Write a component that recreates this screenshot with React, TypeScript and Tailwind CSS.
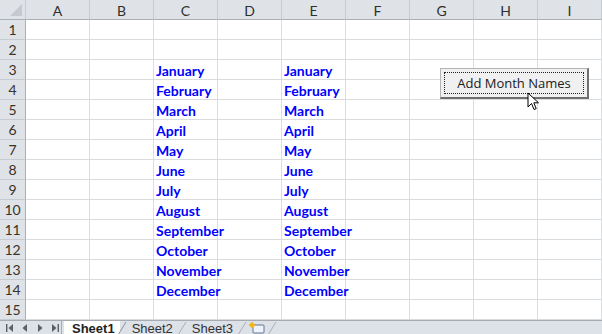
import React from "react";

const COLS = ["A", "B", "C", "D", "E", "F", "G", "H", "I"];
const MONTHS = [
  "January",
  "February",
  "March",
  "April",
  "May",
  "June",
  "July",
  "August",
  "September",
  "October",
  "November",
  "December",
];

function cellText(row: number, col: number) {
  // months sit in C3:C14 and E3:E14
  if ((col === 2 || col === 4) && row >= 3 && row <= 14) return MONTHS[row - 3];
  return "";
}

function Slant({ dark }: { dark?: boolean }) {
  return (
    <svg width="10" height="14" viewBox="0 0 10 14" className="shrink-0 -mx-[3px]">
      <line x1="1" y1="14" x2="9" y2="1" stroke={dark ? "#8a8f98" : "#a9aeb6"} strokeWidth="1" />
    </svg>
  );
}

function NavIcons() {
  return (
    <div className="flex items-center w-[62px] h-full pl-[6px] gap-[7px] border-r border-[#a6abb3]">
      <svg width="8" height="8" viewBox="0 0 8 8">
        <rect x="0" y="0" width="1.4" height="8" fill="#5b5f66" />
        <path d="M7 0 L2.5 4 L7 8 Z" fill="#5b5f66" />
      </svg>
      <svg width="8" height="8" viewBox="0 0 8 8">
        <path d="M6 0 L1.5 4 L6 8 Z" fill="#5b5f66" />
      </svg>
      <svg width="8" height="8" viewBox="0 0 8 8">
        <path d="M2 0 L6.5 4 L2 8 Z" fill="#5b5f66" />
      </svg>
      <svg width="8" height="8" viewBox="0 0 8 8">
        <path d="M1 0 L5.5 4 L1 8 Z" fill="#5b5f66" />
        <rect x="6.6" y="0" width="1.4" height="8" fill="#5b5f66" />
      </svg>
    </div>
  );
}

export default function App() {
  const rows = Array.from({ length: 15 }, (_, i) => i + 1);

  return (
    <div className="w-[602px] h-[334px] overflow-hidden bg-white relative font-['Lato','Liberation_Sans',sans-serif]">
      <div className="grid grid-cols-[26px_repeat(9,64px)] auto-rows-[20px]">
        {/* corner */}
        <div className="bg-[#dfe3e8] border-r border-b border-r-[#c6cbd2] border-b-[#a9afb8] relative">
          <svg width="12" height="12" viewBox="0 0 12 12" className="absolute right-[3px] bottom-[3px]">
            <path d="M12 0 L12 12 L0 12 Z" fill="#c6cad0" />
          </svg>
        </div>
        {COLS.map((c) => (
          <div
            key={c}
            className="bg-[#dfe3e8] border-r border-b border-r-[#c6cbd2] border-b-[#a9afb8] flex items-center justify-center text-[14px] text-[#2f2f2f] pt-px"
          >
            {c}
          </div>
        ))}

        {rows.map((r) => (
          <React.Fragment key={r}>
            <div className="bg-[#dfe3e8] border-r border-b border-r-[#a9afb8] border-b-[#c6cbd2] flex items-center justify-center text-[14px] text-[#3a3127]">
              {r}
            </div>
            {COLS.map((c, ci) => (
              <div
                key={c}
                className="border-r border-b border-[#dadcdd] flex items-center pl-[2px] pt-[1px] text-[14px] font-bold text-[#0000ff] whitespace-nowrap overflow-visible"
              >
                {cellText(r, ci)}
              </div>
            ))}
          </React.Fragment>
        ))}
      </div>

      {/* sheet tab bar */}
      <div className="flex items-stretch h-[14px] bg-[#dde1e8] border-t border-[#a6abb3] font-['Liberation_Sans',sans-serif] text-[13px] leading-none">
        <NavIcons />
        <div className="flex items-stretch">
          <div className="ml-[2px] bg-white flex items-center pl-[8px] pr-[5px] pt-[1px] font-bold text-[#222]">
            Sheet1
          </div>
          <Slant dark />
          <div className="flex items-center pl-[8px] pr-[7px] pt-[1px] text-[#333]">Sheet2</div>
          <Slant />
          <div className="flex items-center pl-[8px] pr-[7px] pt-[1px] text-[#333]">Sheet3</div>
          <Slant />
          <div className="flex items-center px-[4px] pt-[1px]">
            <svg width="18" height="12" viewBox="0 0 18 12">
              <rect x="5" y="3" width="11" height="8" rx="1" fill="#eef3fa" stroke="#5f7591" strokeWidth="1" />
              <circle cx="4" cy="3" r="2.6" fill="#f7c640" />
              <path d="M4 0 L4 6 M1 3 L7 3" stroke="#f2a900" strokeWidth="1" />
            </svg>
          </div>
          <Slant />
        </div>
      </div>

      {/* form button over the sheet */}
      <div className="absolute left-[440px] top-[68px] w-[149px] h-[31px] bg-[#f0f0f0] border-t border-l border-[#b4b4b4] border-r-2 border-b-2 border-r-[#6f6f6f] border-b-[#6f6f6f] p-[3px]">
        <div className="w-full h-full border border-dotted border-[#222] flex items-center justify-center pt-[2px] text-[13px] text-[#1a1a1a] font-['Open_Sans','Liberation_Sans',sans-serif]">
          Add Month Names
        </div>
      </div>

      {/* mouse cursor */}
      <svg width="14" height="20" viewBox="0 0 14 20" className="absolute left-[527px] top-[92px]">
        <path
          d="M1 1 L1 15 L4.5 11.5 L7 17.5 L9.2 16.6 L6.8 10.8 L11.5 10.8 Z"
          fill="#ffffff"
          stroke="#000000"
          strokeWidth="1"
          strokeLinejoin="miter"
        />
      </svg>
    </div>
  );
}
